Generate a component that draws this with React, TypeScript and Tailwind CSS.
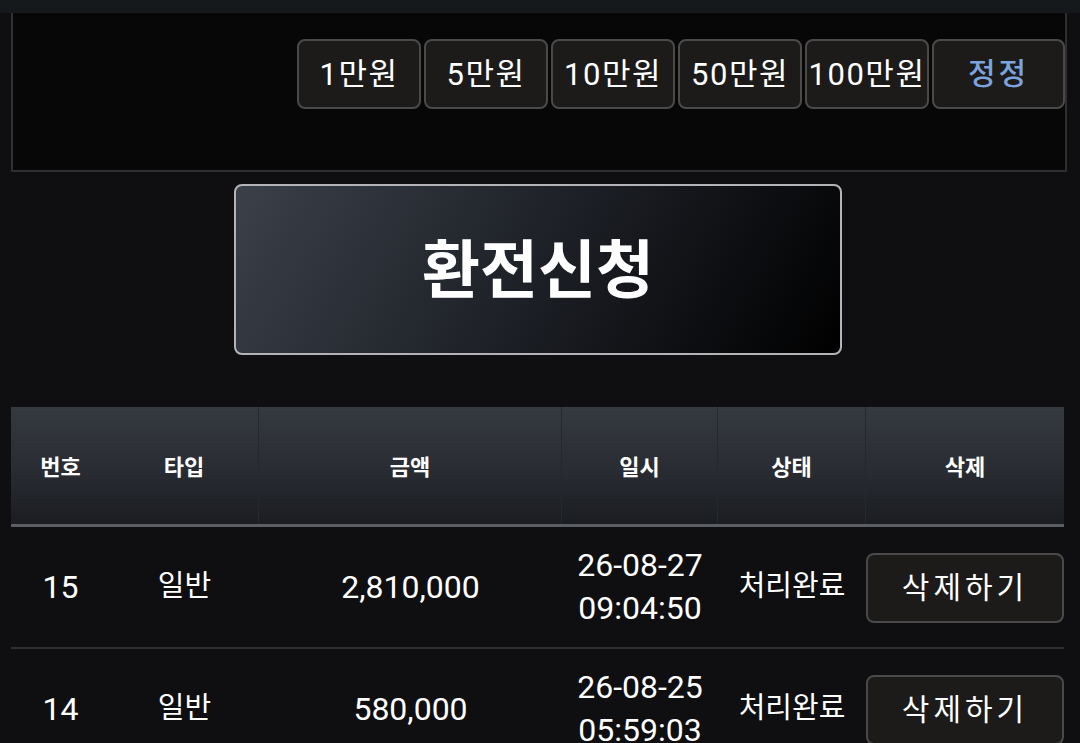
const amounts = ["1만원", "5만원", "10만원", "50만원", "100만원"];

const rows = [
  { no: 15, type: "일반", amount: "2,810,000", date: "26-08-27", time: "09:04:50", status: "처리완료" },
  { no: 14, type: "일반", amount: "580,000", date: "26-08-25", time: "05:59:03", status: "처리완료" },
];

const font = "font-['Roboto','Noto_Sans_CJK_KR',sans-serif]";

export default function App() {
  return (
    <div className={`min-h-screen w-[1080px] overflow-hidden bg-[#0f0f11] text-white ${font}`}>
      <div className="h-[13px] bg-[#16191c]" />

      {/* amount selector panel */}
      <div className="ml-[11px] mr-[13px] h-[159px] border-2 border-t-0 border-[#2f2f2f] bg-[#070707] flex items-start justify-end gap-[3px] pt-[26px]">
        {amounts.map((a) => (
          <button
            key={a}
            className="w-[124px] h-[70px] rounded-lg border-2 border-[#4a4a4a] bg-[#1c1b1a] text-[31px] tracking-[1.5px] leading-none"
          >
            {a}
          </button>
        ))}
        <button className="w-[133px] h-[70px] rounded-lg border-2 border-[#4a4a4a] bg-[#1c1b1a] text-[30px] tracking-[3px] leading-none text-[#7ba3de] font-medium">
          정정
        </button>
      </div>

      {/* submit */}
      <div className="mt-[12px] ml-[234px] w-[608px] h-[171px] rounded-lg border-2 border-[#b4b4b8] bg-[linear-gradient(120deg,#3b4049_0%,#20232a_45%,#000000_100%)] flex items-center justify-center pb-[10px]">
        <span className="text-[63px] font-bold leading-none font-['Noto_Sans_CJK_KR',sans-serif]">환전신청</span>
      </div>

      {/* history table */}
      <div className="mt-[52px] ml-[11px] w-[1053px]">
        <div className="grid grid-cols-[99px_149px_303px_156px_148px_198px] h-[120px] border-b-[3px] border-[#5b5e63] bg-[linear-gradient(180deg,#353940_0%,#2a2d33_50%,#1b1d22_100%)] text-[22px] font-bold font-['Noto_Sans_CJK_KR',sans-serif]">
          <div className="flex items-center justify-center">번호</div>
          <div className="flex items-center justify-center border-r border-[#25282d]">타입</div>
          <div className="flex items-center justify-center border-r border-[#25282d]">금액</div>
          <div className="flex items-center justify-center border-r border-[#25282d]">일시</div>
          <div className="flex items-center justify-center border-r border-[#25282d]">상태</div>
          <div className="flex items-center justify-center">삭제</div>
        </div>

        {rows.map((r) => (
          <div
            key={r.no}
            className="grid grid-cols-[99px_149px_303px_156px_148px_198px] h-[122px] border-b-2 border-[#2e2f31] text-[32px]"
          >
            <div className="flex items-center justify-center">{r.no}</div>
            <div className="flex items-center justify-center text-[29px]">{r.type}</div>
            <div className="flex items-center justify-center">{r.amount}</div>
            <div className="flex flex-col items-center justify-center leading-[43px]">
              <span>{r.date}</span>
              <span>{r.time}</span>
            </div>
            <div className="flex items-center justify-center text-[29px]">{r.status}</div>
            <div className="flex items-center justify-center pt-[2px]">
              <button className="w-[198px] h-[70px] rounded-lg border-2 border-[#4a4a4a] bg-[#1c1b1a] text-[30px] tracking-[4px] leading-none">
                삭제하기
              </button>
            </div>
          </div>
        ))}
      </div>
    </div>
  );
}
